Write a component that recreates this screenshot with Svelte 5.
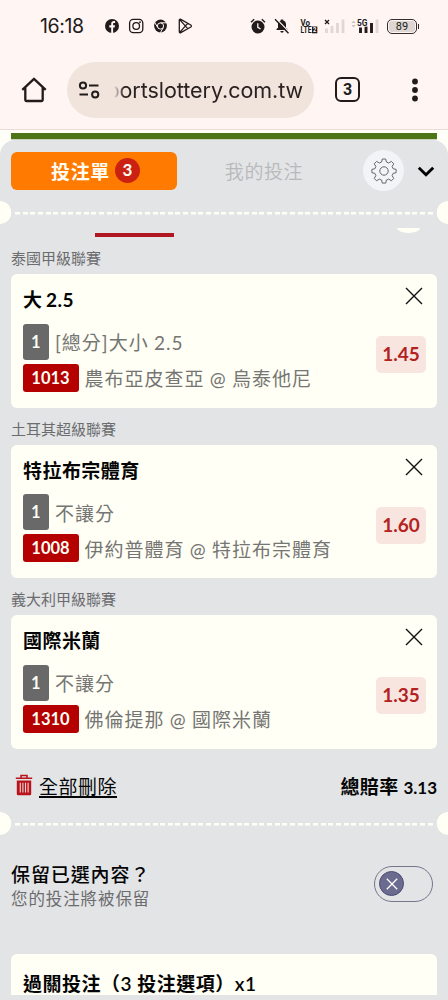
<script lang="ts">
  interface Selection {
    league: string;
    pick: string;
    market: string;
    code: string;
    match: string;
    odds: string;
  }

  let selections = $state<Selection[]>([
    {
      league: '泰國甲級聯賽',
      pick: '大 2.5',
      market: '[總分]大小 2.5',
      code: '1013',
      match: '農布亞皮查亞 @ 烏泰他尼',
      odds: '1.45',
    },
    {
      league: '土耳其超級聯賽',
      pick: '特拉布宗體育',
      market: '不讓分',
      code: '1008',
      match: '伊約普體育 @ 特拉布宗體育',
      odds: '1.60',
    },
    {
      league: '義大利甲級聯賽',
      pick: '國際米蘭',
      market: '不讓分',
      code: '1310',
      match: '佛倫提那 @ 國際米蘭',
      odds: '1.35',
    },
  ]);

  let keep = $state(false);

  function remove(code: string) {
    selections = selections.filter((s) => s.code !== code);
  }

  function removeAll() {
    selections = [];
  }
</script>

<div class="screen">
  <header class="status-bar">
    <span class="clock">16:18</span>
    <svg class="apps" width="90" height="16" viewBox="0 0 90 16">
      <circle cx="8" cy="8" r="7" fill="#211c1b" />
      <path d="M7.2 15V9.4H5.3V7.3h1.9V5.8c0-1.9 1-2.8 2.8-2.8h1.1v2H10c-.7 0-.9.3-.9 1v1.3H11l-.3 2.1H9.1V15z" fill="#fff5f3" />
      <g fill="none" stroke="#211c1b" stroke-width="1.3">
        <rect x="25.6" y="1.4" width="13.2" height="13.2" rx="3.6" />
        <circle cx="32.2" cy="8" r="3.3" />
      </g>
      <circle cx="36" cy="4.2" r="0.9" fill="#211c1b" />
      <circle cx="56.5" cy="8" r="6.4" fill="#211c1b" />
      <g fill="none" stroke="#fff5f3" stroke-width="1">
        <circle cx="56.5" cy="8" r="3.1" />
        <path d="M56.5 4.8h6M53.8 9.6l-3-5M59.3 9.6l-3 5.2" />
      </g>
      <path d="M75.3 2.3v11.4c0 .9.8 1.3 1.5.9l10-5.6c.8-.5.8-1.5 0-2l-10-5.6c-.7-.4-1.5 0-1.5.9zM75.700 1.600l8 9M75.700 14.400l8-9" fill="none" stroke="#211c1b" stroke-width="1.3" />
    </svg>
    <div class="status-right">
      <svg width="16" height="16" viewBox="0 0 16 16">
        <circle cx="8" cy="9" r="6.5" fill="#211c1b" />
        <path d="M1 4.2 4.2 1.3M15 4.2l-3.2-2.9" stroke="#211c1b" stroke-width="1.5" />
        <path d="M7.8 5.3v4.1l2.8 1.6" fill="none" stroke="#fff5f3" stroke-width="1.3" />
      </svg>
      <svg width="16" height="16" viewBox="0 0 16 16">
        <path d="M2.500 12v-1L4 9.700V6.300C4 4.300 5.200 3 6.800 2.600v-1h2.400v1C10.900 3 12 4.400 12 6.300v3.400l1.500 1.300v1zM6.300 13h3.400a1.700 1.700 0 0 1-3.400 0z" fill="#211c1b" />
        <path d="M2.300.8 15.300 14.300" stroke="#fff5f3" stroke-width="1.300" />
        <path d="M1 1.200 14.500 15.300" stroke="#211c1b" stroke-width="1.400" />
      </svg>
      <svg class="volte" width="18" height="16" viewBox="0 0 18 16">
        <g font-size="9.500" font-weight="700" fill="#211c1b">
          <text x="0.500" y="7.500" textLength="9.500" lengthAdjust="spacingAndGlyphs">Vo</text>
          <text x="0.500" y="15.300" textLength="11" lengthAdjust="spacingAndGlyphs">LTE</text>
        </g>
        <rect x="12" y="8.500" width="5.300" height="6.800" fill="#211c1b" />
        <text x="13" y="14.300" font-size="7" font-weight="700" fill="#fff5f3" textLength="3.300" lengthAdjust="spacingAndGlyphs">2</text>
      </svg>
      <svg width="21" height="16" viewBox="0 0 21 16">
        <path d="M1 2l4 4M5 2L1 6" stroke="#211c1b" stroke-width="1.300" />
        <path d="M2.500 15v-4.500M8 15V8M13.500 15V5M19 15V1.500" stroke="#dfd8d6" stroke-width="2.800" />
      </svg>
      <svg class="signal" width="29" height="16" viewBox="0 0 29 16">
        <path d="M.5 5 2.500 2.500 4.500 5zM.5 7l2 2.500 2-2.500z" fill="#c9c2c0" />
        <path d="M9.500 15V9.500M15 15V8.500M20.500 15V5" stroke="#211c1b" stroke-width="2.900" />
        <path d="M26 15V1.500" stroke="#dfd8d6" stroke-width="2.800" />
        <text x="6" y="8" font-size="9.500" font-weight="700" textLength="10.500" lengthAdjust="spacingAndGlyphs">5G</text>
      </svg>
      <span class="battery"><span>89</span></span>
    </div>
  </header>

  <nav class="browser">
    <svg class="home" width="28" height="28" viewBox="0 0 28 28">
      <path d="M2.300 13.800 14 2.800l11.700 11M5.300 11.500v12.100c0 .8.500 1.400 1.300 1.400h14.800c.8 0 1.300-.6 1.300-1.400V11.500" fill="none" stroke="#211c1b" stroke-width="2.300" stroke-linejoin="round" />
    </svg>
    <div class="address">
      <svg width="22" height="18" viewBox="0 0 22 18">
        <g fill="none" stroke="#211c1b" stroke-width="2">
          <circle cx="5" cy="4.500" r="3.100" />
          <path d="M11 4.500h9.500M1.500 13.500H10" />
          <circle cx="17.200" cy="13.500" r="3.100" />
        </g>
      </svg>
      <div class="url"><span>portslottery.com.tw</span></div>
    </div>
    <button class="tab-count" aria-label="tabs">3</button>
    <svg class="more" width="8" height="24" viewBox="0 0 8 24">
      <g fill="#211c1b">
        <circle cx="4" cy="3.500" r="2.900" />
        <circle cx="4" cy="12" r="2.900" />
        <circle cx="4" cy="20.500" r="2.900" />
      </g>
    </svg>
  </nav>

  <div class="page">
    <div class="pitch"></div>
    <main class="sheet">
      <div class="tabs">
        <button class="tab active">投注單 <span class="count">{selections.length}</span></button>
        <button class="tab idle">我的投注</button>
        <button class="settings" aria-label="settings">
          <svg width="26" height="26" viewBox="0 0 26 26">
            <path
              d="M11.300 1h3.400l.7 3 2.300 1 2.700-1.600 2.400 2.400L21.100 8.400l1 2.300 3 .7v3.300l-3 .7-1 2.300 1.700 2.700-2.400 2.400-2.700-1.700-2.300 1-.7 3h-3.400l-.7-3-2.300-1-2.700 1.700-2.400-2.400 1.700-2.700-1-2.300-3-.7v-3.300l3-.7 1-2.300-1.700-2.600 2.400-2.400L8.300 5l2.300-1z"
            />
            <circle cx="13" cy="13" r="4.200" />
          </svg>
        </button>
        <svg class="chevron" width="18" height="12" viewBox="0 0 18 12">
          <path d="M1.800 2.800 9 9.800l7.200-7" fill="none" stroke="#000" stroke-width="2.900" />
        </svg>
      </div>

      <div class="perforation"></div>
      <div class="scrolled"><span class="marker"></span><span class="bump"></span></div>

      {#each selections as s (s.code)}
        <h3 class="league">{s.league}</h3>
        <article class="card">
          <div class="card-body">
            <h4>{s.pick}</h4>
            <div class="line market"><span class="tag grey">1</span>{s.market}</div>
            <div class="line"><span class="tag red">{s.code}</span>{s.match}</div>
          </div>
          <div class="card-side">
            <button class="close" aria-label="remove" onclick={() => remove(s.code)}>
              <svg width="18" height="18" viewBox="0 0 18 18">
                <path d="M1 1l16 16M17 1 1 17" stroke="#111" stroke-width="1.400" />
              </svg>
            </button>
            <span class="odds">{s.odds}</span>
          </div>
        </article>
      {/each}

      <div class="summary">
        <button class="clear" onclick={removeAll}>
          <svg width="18" height="22" viewBox="0 0 18 22">
            <path d="M.8 4.300h16.400M6 4V1.500h6V4" fill="none" stroke="#b8141c" stroke-width="1.600" />
            <path d="M1.800 6.500h14.400V20q0 1.200-1.200 1.200H3Q1.800 21.200 1.800 20z" fill="#b8141c" />
            <path d="M5.300 8.700v9.800M7.900 8.700v9.800M10.500 8.700v9.800M13.100 8.700v9.800" stroke="#f3d5d6" stroke-width="1.100" />
          </svg>
          <span>全部刪除</span>
        </button>
        <strong>總賠率 <span>3.13</span></strong>
      </div>

      <div class="perforation"></div>

      <div class="keep">
        <div>
          <p class="keep-title">保留已選內容？</p>
          <p class="keep-note">您的投注將被保留</p>
        </div>
        <button class="toggle" class:on={keep} aria-label="keep" onclick={() => (keep = !keep)}>
          <span class="knob">
            <svg width="12" height="12" viewBox="0 0 12 12">
              <path d="M.8.8l10.400 10.400M11.200.8.800 11.200" stroke="#fff" stroke-width="1.300" />
            </svg>
          </span>
        </button>
      </div>

      <section class="parlay">過關投注（3 投注選項）x1</section>
    </main>
  </div>
</div>

<style>
  :global(body) {
    background: #e3e4e6;
  }

  .screen {
    width: 448px;
    height: 1000px;
    overflow: hidden;
    display: flex;
    flex-direction: column;
    background: #e3e4e6;
    color: #050505;
    font-family: Lato, 'Noto Sans CJK TC', sans-serif;
  }

  .screen * {
    box-sizing: border-box;
  }

  button {
    border: 0;
    padding: 0;
    background: none;
    font-family: inherit;
    color: inherit;
  }

  svg {
    display: block;
    flex: none;
  }

  h3,
  h4,
  p {
    margin: 0;
  }

  /* phone status bar */
  .status-bar {
    height: 52px;
    flex: none;
    display: flex;
    align-items: center;
    padding: 0 31px 0 40px;
    background: #fff5f3;
    color: #211c1b;
    font-family: Roboto, sans-serif;
  }

  .clock {
    width: 64px;
    font-family: Inter, sans-serif;
    font-size: 19.500px;
    letter-spacing: -0.400px;
  }

  .status-right {
    display: flex;
    align-items: center;
    margin-left: auto;
  }

  .status-right > :nth-child(2) {
    margin-left: 8px;
  }

  .volte {
    margin: 0 6px 0 10px;
  }

  .signal {
    margin-left: 6px;
  }

  .signal text {
    fill: #211c1b;
    stroke: #fff5f3;
    stroke-width: 1px;
    paint-order: stroke;
  }

  .battery {
    position: relative;
    width: 30px;
    height: 15px;
    margin-left: 7px;
    padding: 1px;
    border: 1.500px solid #332e2d;
    border-radius: 5px;
    font-size: 11px;
    line-height: 11px;
    text-align: center;
  }

  .battery span {
    display: block;
    height: 100%;
    border-radius: 3px;
    background: #ddd6d3;
  }

  .battery::after {
    content: '';
    position: absolute;
    top: 4px;
    right: -3px;
    width: 1.500px;
    height: 5px;
    background: #332e2d;
  }

  /* browser toolbar */
  .browser {
    height: 78px;
    flex: none;
    display: flex;
    align-items: center;
    padding: 0 29px 2px 20px;
    border-bottom: 1px solid #ecdcd3;
    background: #fff5f3;
  }

  .address {
    display: flex;
    align-items: center;
    width: 247px;
    height: 56px;
    margin-left: 19px;
    padding: 0 11px 0 11px;
    border-radius: 28px;
    background: #f0e4dd;
  }

  .url {
    display: flex;
    justify-content: flex-end;
    width: 189px;
    margin-left: 14px;
    overflow: hidden;
    color: #2a2120;
    font-family: Inter, sans-serif;
    font-size: 21.500px;
    letter-spacing: -0.050px;
    line-height: 30px;
    white-space: nowrap;
    mask-image: linear-gradient(90deg, transparent, #000 10px);
  }

  .tab-count {
    width: 25px;
    height: 25px;
    margin-left: 21px;
    border: 2.500px solid #211c1b;
    border-radius: 6px;
    color: #211c1b;
    font-family: Roboto, sans-serif;
    font-size: 16px;
    font-weight: 700;
    line-height: 20px;
  }

  .more {
    margin-left: auto;
  }

  /* betting slip */
  .page {
    flex: 1;
    padding-top: 3px;
    background: #fffdf8;
  }

  .pitch {
    height: 7px;
    margin: 0 11px;
    background: #4d7517;
    border-bottom: 1px solid #c9d3b9;
  }

  .sheet {
    height: 860px;
    border-radius: 15px 15px 0 0;
    background: #e3e4e6;
  }

  .tabs {
    height: 61px;
    display: flex;
    align-items: center;
    padding: 0 13px 0 11px;
  }

  .tab {
    display: flex;
    align-items: center;
    justify-content: center;
    font-size: 19px;
    letter-spacing: 0.600px;
  }

  .tab.active {
    width: 166px;
    height: 38px;
    gap: 5px;
    padding-left: 3px;
    border-radius: 6px;
    background: #ff7a00;
    color: #fffdf3;
    font-weight: 700;
  }

  .count {
    width: 25px;
    height: 25px;
    border-radius: 50%;
    background: #cb2112;
    font-size: 17px;
    letter-spacing: 0;
    line-height: 24px;
  }

  .tab.idle {
    width: 174px;
    margin-right: 12px;
    color: #b7b9bb;
    font-weight: 350;
  }

  .settings {
    display: flex;
    align-items: center;
    justify-content: center;
    width: 41px;
    height: 41px;
    border-radius: 50%;
    background: #f3f4f7;
  }

  .settings path,
  .settings circle {
    fill: none;
    stroke: #63666a;
    stroke-width: 1;
    stroke-linejoin: round;
  }

  .chevron {
    margin-left: auto;
  }

  .perforation {
    height: 23px;
    background:
      radial-gradient(circle at 0 50%, #fffff5 11px, transparent 11.600px),
      radial-gradient(circle at 100% 50%, #fffff5 11px, transparent 11.600px),
      repeating-linear-gradient(90deg, #fffff5 0 5px, transparent 5px 7.640px) 15px 11px / 420px 2.500px no-repeat;
  }

  .scrolled {
    display: flex;
    justify-content: space-between;
    align-items: flex-end;
    height: 13px;
    padding: 0 28px 0 95px;
  }

  .marker {
    width: 79px;
    height: 4px;
    background: #b01720;
  }

  .bump {
    width: 23px;
    height: 5px;
    margin-bottom: 4px;
    border-radius: 0 0 50% 50% / 0 0 100% 100%;
    background: #fffff5;
  }

  .league {
    height: 37px;
    padding: 7px 11px 0;
    color: #6b6c6e;
    font-size: 15px;
    font-weight: 400;
    line-height: 28px;
  }

  .card {
    display: flex;
    justify-content: space-between;
    height: 133.600px;
    margin: 0 11px;
    padding: 0 11px;
    border-radius: 6px;
    background: #fffff5;
  }

  .card-body {
    padding-top: 11px;
  }

  h4 {
    height: 38.500px;
    padding-left: 1px;
    font-size: 19px;
    font-weight: 700;
    letter-spacing: 0.450px;
    line-height: 30px;
    word-spacing: -1.500px;
  }

  .line {
    display: flex;
    align-items: center;
    height: 28px;
    padding-left: 0.500px;
    color: #757573;
    font-size: 19px;
    font-weight: 400;
    letter-spacing: 1px;
    white-space: pre;
    word-spacing: -0.500px;
  }

  .line.market {
    height: 36px;
    margin-bottom: 4px;
  }

  .tag {
    margin-right: 6px;
    border-radius: 3px;
    color: #fffff5;
    font-size: 16.500px;
    font-weight: 700;
    letter-spacing: 0;
    line-height: 28px;
    text-align: center;
  }

  .tag.grey {
    width: 26.500px;
    background: #696969;
    line-height: 36px;
  }

  .tag.red {
    width: 56px;
    background: #b50000;
  }

  .card-side {
    display: flex;
    flex-direction: column;
    align-items: flex-end;
  }

  .close {
    margin: 13px 3px 0 0;
  }

  .odds {
    width: 50px;
    height: 37px;
    margin-top: 31px;
    border-radius: 5px;
    background: #f9e5df;
    color: #b3221f;
    font-size: 19px;
    font-weight: 700;
    line-height: 36px;
    text-align: center;
  }

  .summary {
    display: flex;
    align-items: center;
    justify-content: space-between;
    height: 63px;
    padding: 10px 11px 0 15px;
  }

  .clear {
    display: flex;
    align-items: center;
    gap: 6px;
    font-size: 19px;
    letter-spacing: 0.500px;
    text-decoration: underline;
    text-decoration-thickness: 1.500px;
    text-underline-offset: 2px;
  }

  .summary strong {
    font-size: 19px;
    letter-spacing: 0.300px;
  }

  .summary strong span {
    font-size: 17px;
    letter-spacing: 0;
  }

  .keep {
    display: flex;
    align-items: center;
    justify-content: space-between;
    height: 98px;
    padding: 0 15px 0 11px;
  }

  .keep div {
    padding-top: 5px;
  }

  .keep-title {
    font-size: 19px;
    font-weight: 500;
    letter-spacing: 0.900px;
    line-height: 25px;
  }

  .keep-note {
    color: #6b6c6e;
    font-size: 16.500px;
    letter-spacing: 0.900px;
    line-height: 24px;
  }

  .toggle {
    display: flex;
    align-items: center;
    width: 59px;
    height: 36px;
    padding: 0 4px;
    border: 1.300px solid #74748c;
    border-radius: 18px;
  }

  .toggle.on {
    justify-content: flex-end;
  }

  .knob {
    display: flex;
    align-items: center;
    justify-content: center;
    width: 25px;
    height: 25px;
    border: 1.500px solid #4c4c73;
    border-radius: 50%;
    background: #6b6b90;
  }

  .parlay {
    height: 41px;
    margin: 21px 11px 0;
    padding: 15px 12px 0;
    overflow: hidden;
    border-radius: 6px 6px 0 0;
    background: #fffff5;
    font-size: 19px;
    font-weight: 600;
    letter-spacing: 0.500px;
    line-height: 30px;
  }
</style>
